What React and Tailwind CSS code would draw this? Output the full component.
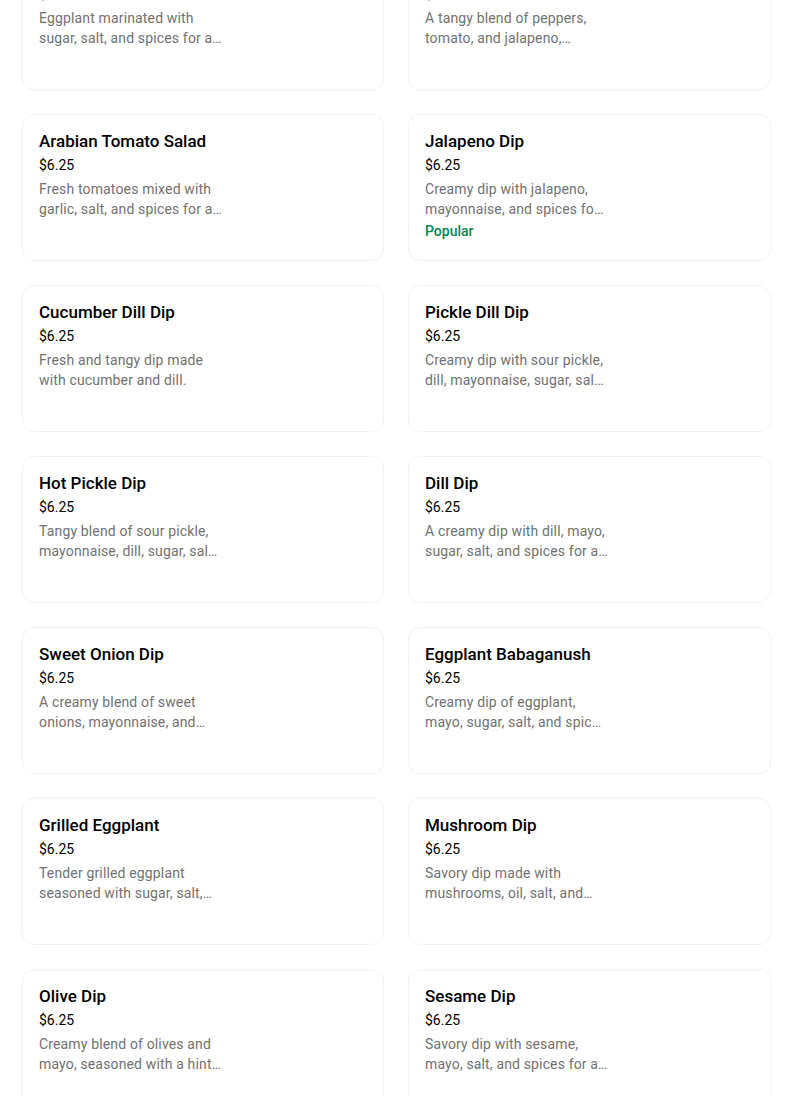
import React from "react";

const items = [
  { t: "Baba Ghanoush", l1: "Eggplant marinated with", l2: "sugar, salt, and spices for a…" },
  { t: "Spicy Salsa", l1: "A tangy blend of peppers,", l2: "tomato, and jalapeno,…" },
  { t: "Arabian Tomato Salad", l1: "Fresh tomatoes mixed with", l2: "garlic, salt, and spices for a…" },
  { t: "Jalapeno Dip", l1: "Creamy dip with jalapeno,", l2: "mayonnaise, and spices fo…", popular: true },
  { t: "Cucumber Dill Dip", l1: "Fresh and tangy dip made", l2: "with cucumber and dill." },
  { t: "Pickle Dill Dip", l1: "Creamy dip with sour pickle,", l2: "dill, mayonnaise, sugar, sal…" },
  { t: "Hot Pickle Dip", l1: "Tangy blend of sour pickle,", l2: "mayonnaise, dill, sugar, sal…" },
  { t: "Dill Dip", l1: "A creamy dip with dill, mayo,", l2: "sugar, salt, and spices for a…" },
  { t: "Sweet Onion Dip", l1: "A creamy blend of sweet", l2: "onions, mayonnaise, and…" },
  { t: "Eggplant Babaganush", l1: "Creamy dip of eggplant,", l2: "mayo, sugar, salt, and spic…" },
  { t: "Grilled Eggplant", l1: "Tender grilled eggplant", l2: "seasoned with sugar, salt,…" },
  { t: "Mushroom Dip", l1: "Savory dip made with", l2: "mushrooms, oil, salt, and…" },
  { t: "Olive Dip", l1: "Creamy blend of olives and", l2: "mayo, seasoned with a hint…" },
  { t: "Sesame Dip", l1: "Savory dip with sesame,", l2: "mayo, salt, and spices for a…" },
];

function Card({ item }) {
  return (
    <div className="h-[147px] rounded-xl border border-[#f1f1f1] bg-white px-4 pt-[14px]">
      <div className="text-[17px] leading-6 font-medium text-black">{item.t}</div>
      <div className="mt-[2px] text-[14px] leading-5 text-black">$6.25</div>
      <div className="mt-1 text-[14px] leading-5 tracking-[0.15px] text-[#717171] whitespace-nowrap">
        <div>{item.l1}</div>
        <div>{item.l2}</div>
      </div>
      {item.popular && (
        <div className="mt-[2px] text-[14px] leading-5 font-medium text-[#0e8345]">Popular</div>
      )}
    </div>
  );
}

export default function App() {
  return (
    <div className="min-h-[1096px] w-[804px] overflow-hidden bg-white" style={{ fontFamily: "Roboto, 'Noto Sans', sans-serif" }}>
      <div className="-mt-[57px] grid grid-cols-[362px_363px] gap-x-[24px] gap-y-[24px] pl-[22px]">
        {items.map((it, i) => (
          <Card key={i} item={it} />
        ))}
      </div>
    </div>
  );
}
